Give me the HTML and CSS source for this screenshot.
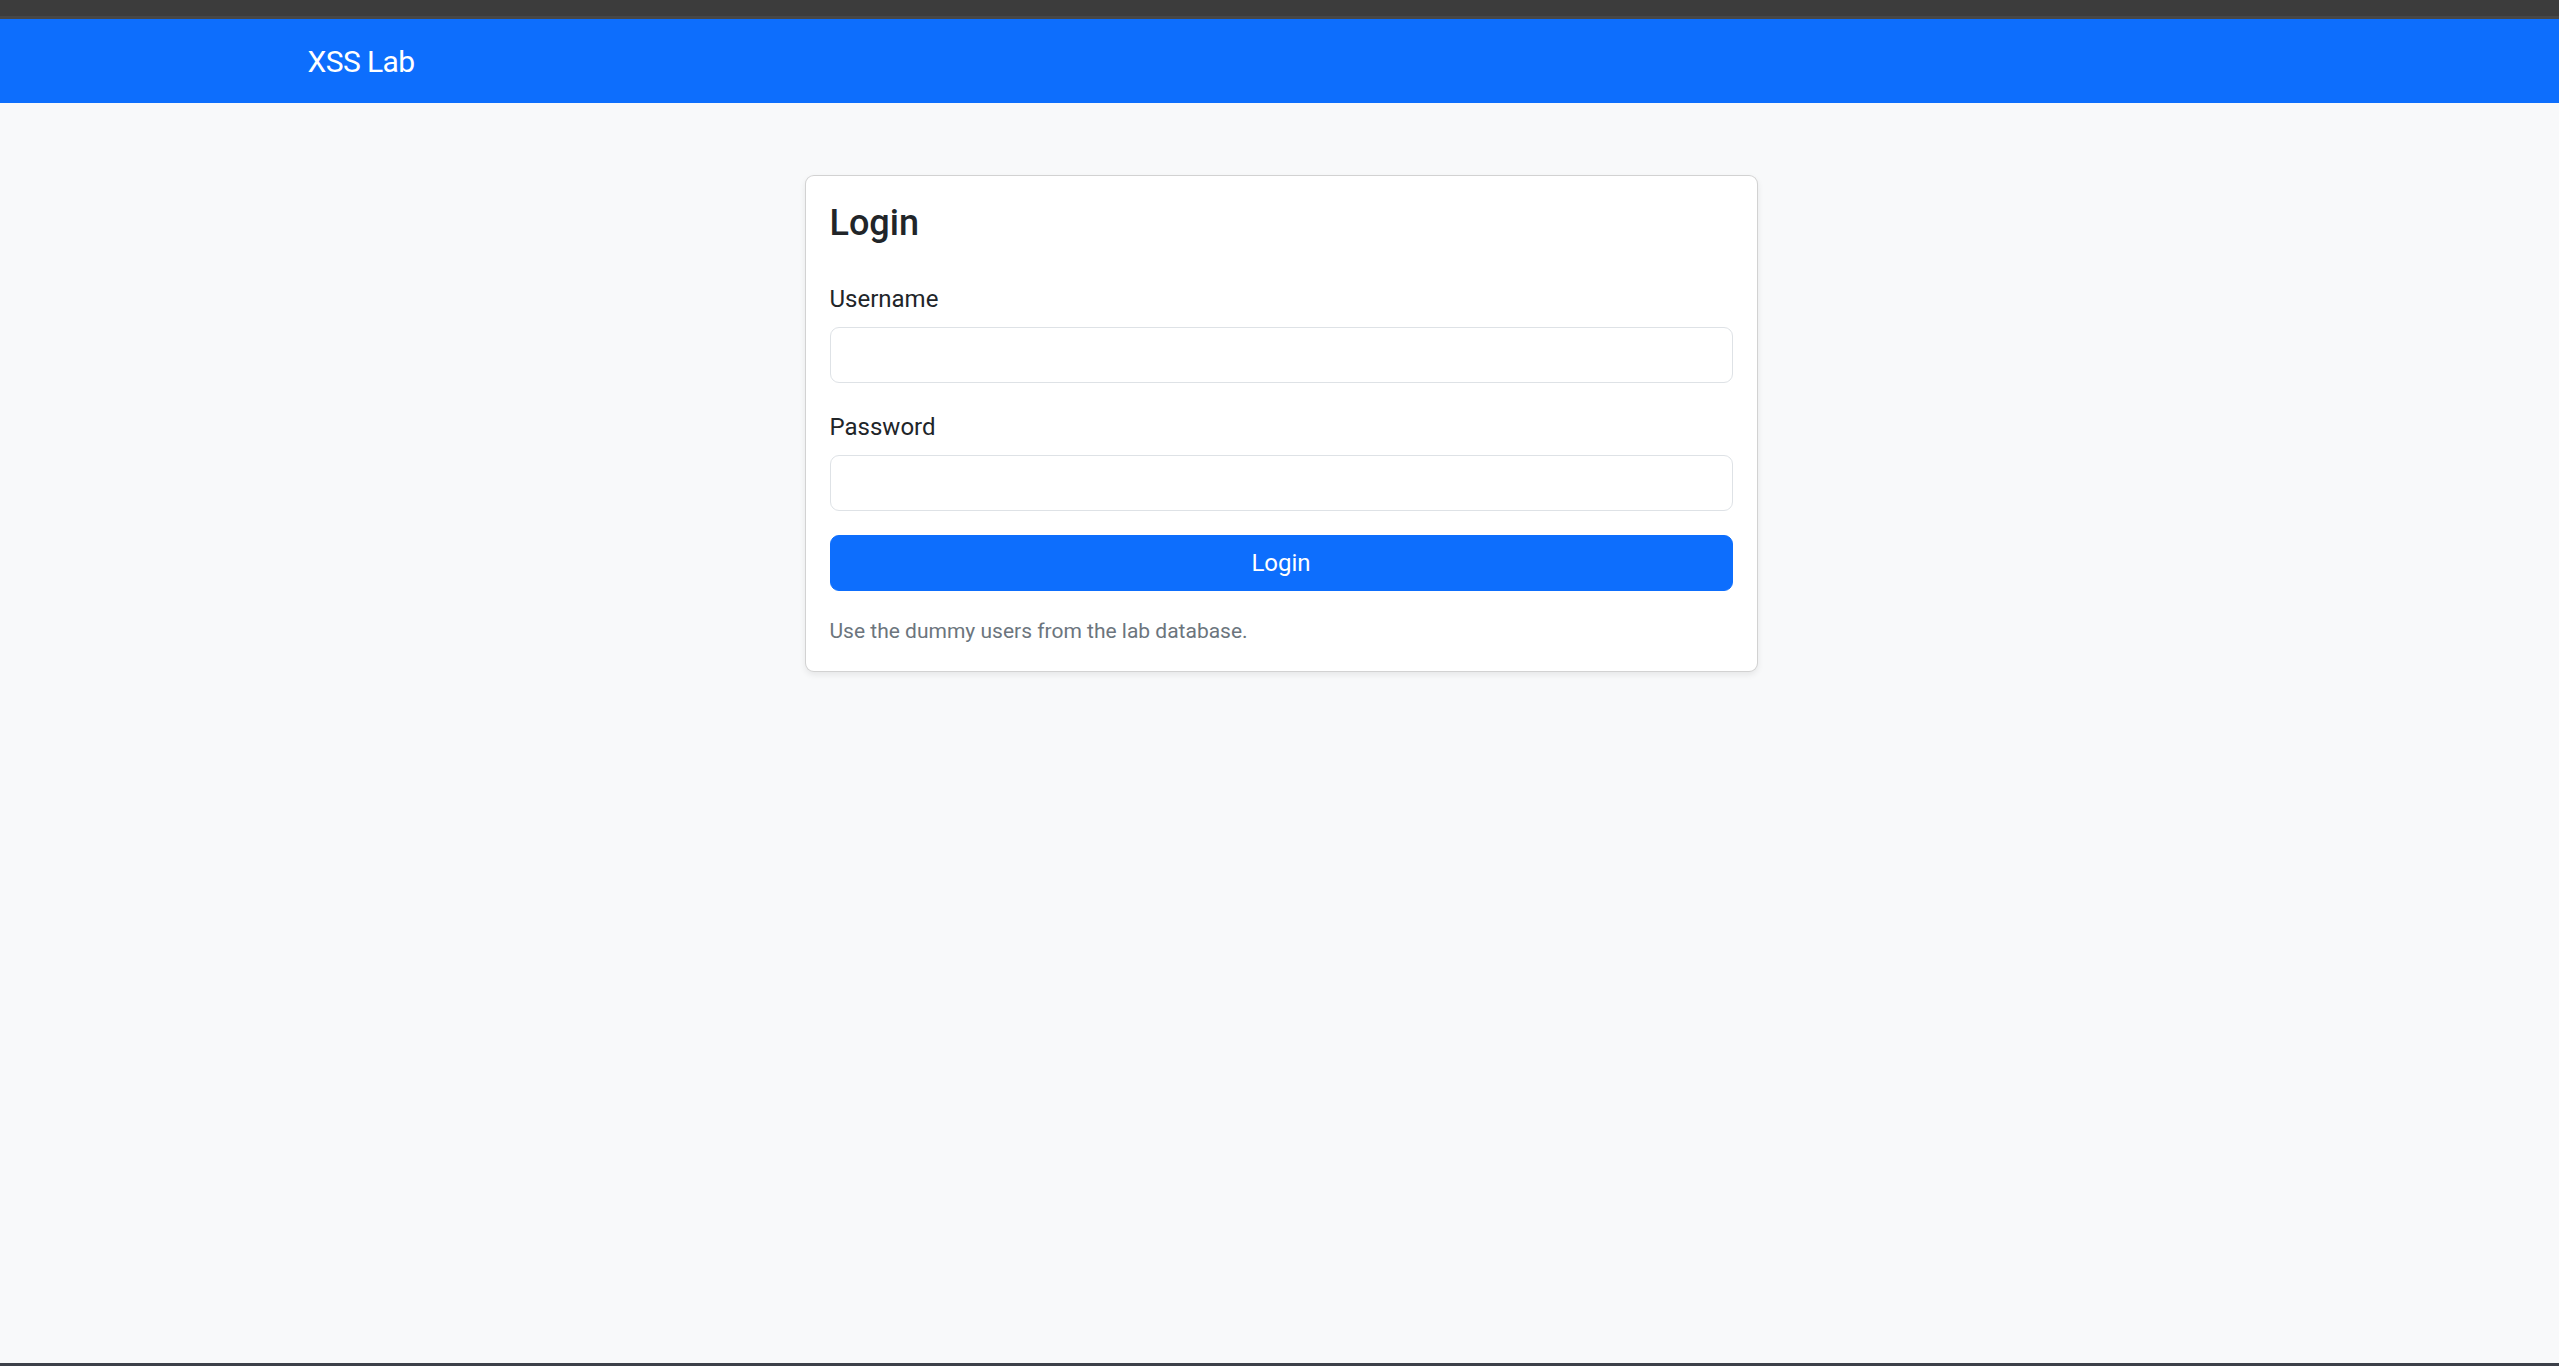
FILE: index.html
```html
<!DOCTYPE html>
<html lang="en">
<head>
<meta charset="utf-8">
<title>XSS Lab - Login</title>
<link rel="stylesheet" href="styles.css">
</head>
<body>
<div class="chrome"></div>
<nav class="navbar">
  <div class="container">
    <a class="brand" href="#">XSS Lab</a>
  </div>
</nav>
<main class="main">
  <div class="container row-center">
    <div class="card">
      <div class="card-body">
        <h4 class="card-title">Login</h4>
        <form class="form">
          <div class="field">
            <label class="label" for="username">Username</label>
            <input class="input" id="username" type="text">
          </div>
          <div class="field">
            <label class="label" for="password">Password</label>
            <input class="input" id="password" type="password">
          </div>
          <button class="btn" type="button">Login</button>
        </form>
        <p class="hint">Use the dummy users from the lab database.</p>
      </div>
    </div>
  </div>
</main>
<div class="bottom-line"></div>
</body>
</html>
```

FILE: styles.css
```css
* { box-sizing: border-box; }

html, body {
  margin: 0;
  padding: 0;
}

body {
  min-height: 100vh;
  display: flex;
  flex-direction: column;
  background: #f8f9fa;
  color: #212529;
  font-family: "Segoe UI", Roboto, "Noto Sans", "Liberation Sans", sans-serif;
  font-size: 24px;
  line-height: 1.5;
}

.chrome {
  height: 19px;
  background: #3c3c3c;
  border-bottom: 3px solid #474747;
  flex: none;
}

.navbar {
  height: 84px;
  background: #0d6efd;
  display: flex;
  align-items: center;
  flex: none;
}

.container {
  width: 1980px;
  max-width: 100%;
  margin: 0 auto;
  padding: 0 18px;
}

.brand {
  color: #fff;
  text-decoration: none;
  font-size: 30px;
  line-height: 1.5;
  letter-spacing: -0.6px;
}

.main {
  flex: 1;
}

.row-center {
  display: flex;
  justify-content: center;
  padding-left: 21px;
}

.card {
  width: 953px;
  margin-top: 72px;
  background: #fff;
  border: 1px solid rgba(0, 0, 0, 0.175);
  border-radius: 9px;
  box-shadow: 0 3px 6px rgba(0, 0, 0, 0.075);
}

.card-body {
  padding: 24px;
}

.card-title {
  margin: 0 0 36px;
  padding-top: 2px;
  height: 43px;
  font-size: 36px;
  font-weight: 500;
  line-height: 1.2;
}

.field {
  margin-bottom: 24px;
}

.label {
  display: block;
  margin-bottom: 12px;
  padding-top: 2px;
  height: 36px;
  font-size: 24px;
  line-height: 1.5;
}

.input {
  display: block;
  width: 100%;
  height: 56px;
  padding: 9px 18px;
  font: inherit;
  color: #212529;
  background: #fff;
  border: 1px solid #dee2e6;
  border-radius: 9px;
  outline: none;
}

.btn {
  display: block;
  width: 100%;
  height: 56px;
  padding: 0 18px;
  font: inherit;
  font-size: 24px;
  color: #fff;
  background: #0d6efd;
  border: 1px solid #0d6efd;
  border-radius: 9px;
  cursor: pointer;
}

.hint {
  margin: 24px 0 0;
  padding-top: 1px;
  height: 32px;
  font-size: 21px;
  line-height: 1.5;
  color: #6c757d;
}

.bottom-line {
  height: 3px;
  background: #3c4049;
  flex: none;
}
```
